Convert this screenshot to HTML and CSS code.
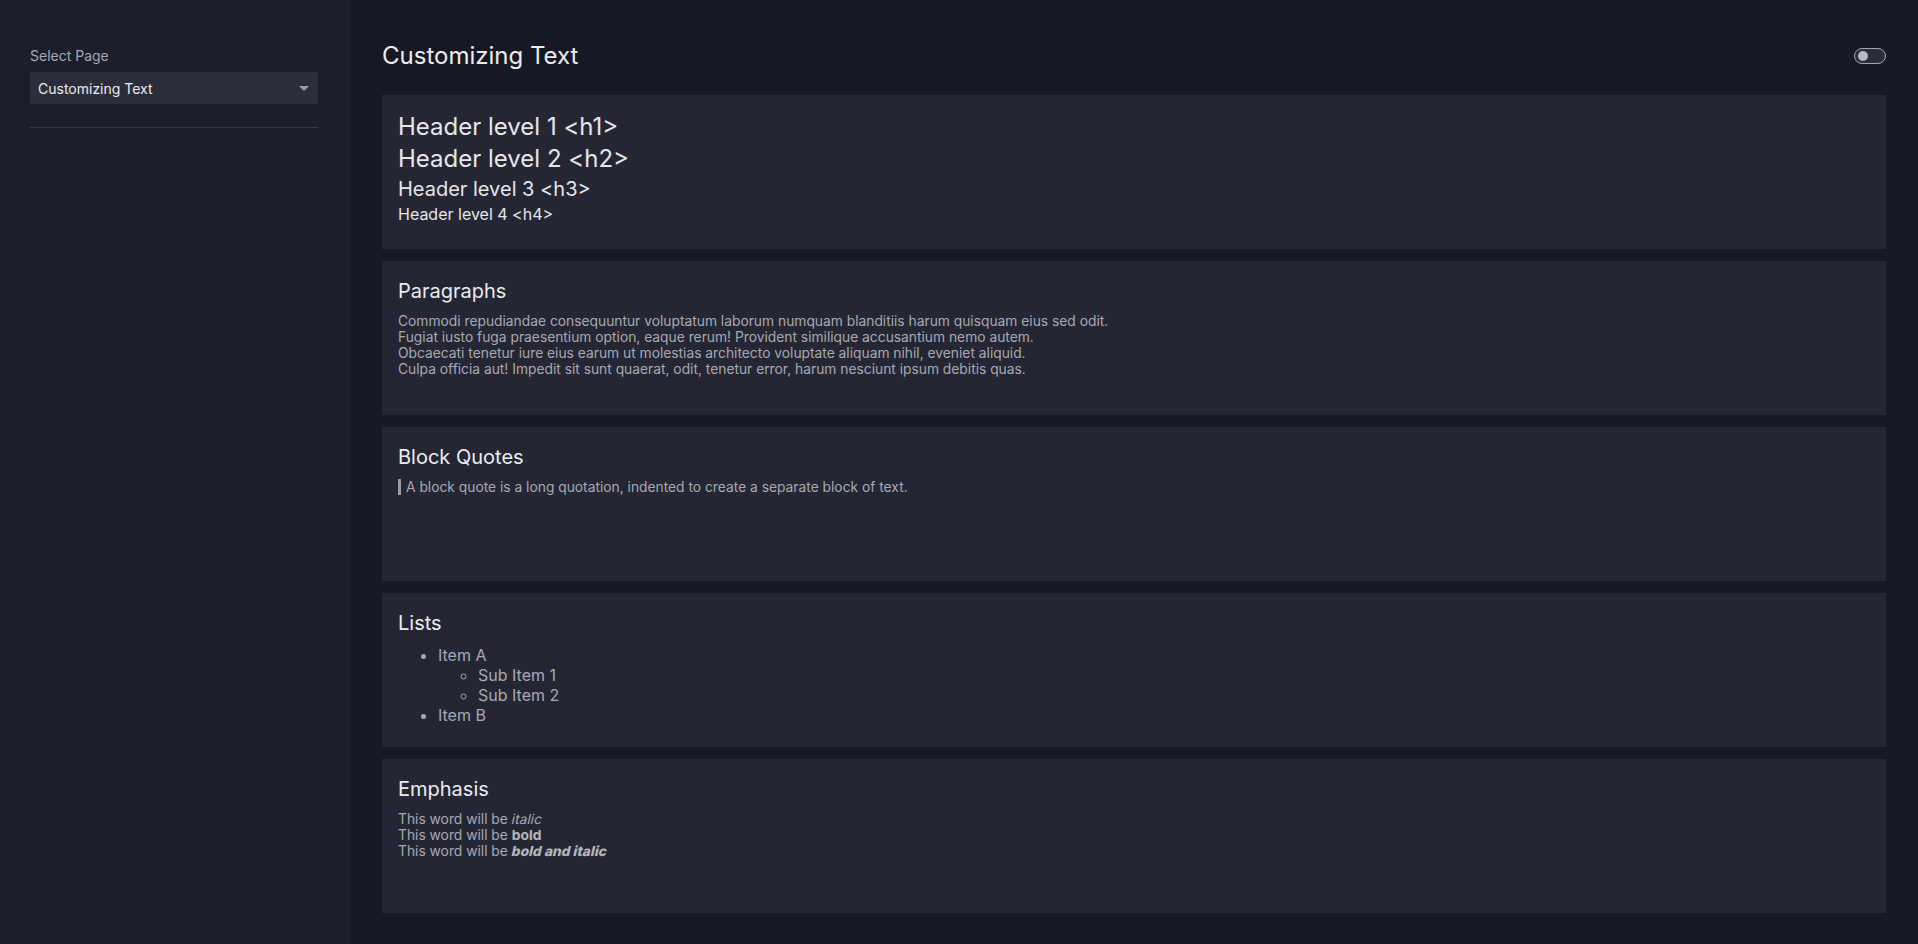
FILE: index.html
```html
<!DOCTYPE html>
<html>
<head>
<meta charset="utf-8">
<link rel="stylesheet" href="styles.css">
</head>
<body>
<div class="app">
  <aside class="sidebar">
    <div class="label">Select Page</div>
    <div class="select">
      <span>Customizing Text</span>
      <span class="caret"></span>
    </div>
    <hr class="divider">
  </aside>
  <main class="main">
    <div class="topbar">
      <h1 class="title">Customizing Text</h1>
      <div class="toggle"><span class="knob"></span></div>
    </div>
    <section class="card">
      <div class="h1">Header level 1 &lt;h1&gt;</div>
      <div class="h2">Header level 2 &lt;h2&gt;</div>
      <div class="h3">Header level 3 &lt;h3&gt;</div>
      <div class="h4">Header level 4 &lt;h4&gt;</div>
    </section>
    <section class="card">
      <h3 class="card-title">Paragraphs</h3>
      <p class="para">Commodi repudiandae consequuntur voluptatum laborum numquam blanditiis harum quisquam eius sed odit.<br>Fugiat iusto fuga praesentium option, eaque rerum! Provident similique accusantium nemo autem.<br>Obcaecati tenetur iure eius earum ut molestias architecto voluptate aliquam nihil, eveniet aliquid.<br>Culpa officia aut! Impedit sit sunt quaerat, odit, tenetur error, harum nesciunt ipsum debitis quas.</p>
    </section>
    <section class="card">
      <h3 class="card-title">Block Quotes</h3>
      <blockquote class="quote">A block quote is a long quotation, indented to create a separate block of text.</blockquote>
    </section>
    <section class="card">
      <h3 class="card-title">Lists</h3>
      <ul class="list">
        <li>Item A
          <ul class="sublist">
            <li>Sub Item 1</li>
            <li>Sub Item 2</li>
          </ul>
        </li>
        <li>Item B</li>
      </ul>
    </section>
    <section class="card">
      <h3 class="card-title">Emphasis</h3>
      <p class="para emph">This word will be <em>italic</em><br>This word will be <strong>bold</strong><br>This word will be <strong><em>bold and italic</em></strong></p>
    </section>
  </main>
</div>
</body>
</html>
```

FILE: styles.css
```css
* { box-sizing: border-box; }
html, body { margin: 0; padding: 0; }
body {
  background: #161823;
  font-family: Inter, "Noto Sans", sans-serif;
  color: #e6e6e8;
}
.app {
  display: flex;
  width: 1918px;
  height: 944px;
}
.sidebar {
  width: 350px;
  flex: none;
  background: #1c1e2a;
  padding: 46px 32px 0 30px;
}
.label {
  font-size: 14px;
  line-height: 20px;
  color: #a8aab2;
  margin-bottom: 6px;
}
.select {
  height: 32px;
  background: #2b2d3a;
  display: flex;
  align-items: center;
  justify-content: space-between;
  padding: 0 9px 0 8px;
  font-size: 14px;
  color: #ececee;
}
.caret {
  width: 0;
  height: 0;
  border-left: 5px solid transparent;
  border-right: 5px solid transparent;
  border-top: 5px solid #9a9ca4;
}
.divider {
  border: 0;
  border-top: 1px solid #33364a;
  margin: 23px 0 0 0;
}
.main {
  flex: 1;
  padding: 41px 32px 0 32px;
}
.topbar {
  display: flex;
  justify-content: space-between;
  align-items: center;
  margin-bottom: 25px;
}
.title {
  margin: 0;
  font-size: 24px;
  line-height: 29px;
  font-weight: 400;
  color: #ececee;
}
.toggle {
  width: 32px;
  height: 16px;
  border: 1px solid #a4a6ae;
  border-radius: 8px;
  background: #2b2d3a;
  display: flex;
  align-items: center;
  padding-left: 3px;
}
.knob {
  width: 10px;
  height: 10px;
  border-radius: 50%;
  background: #b8bac0;
}
.card {
  background: #242633;
  height: 154px;
  padding: 16px;
  margin-bottom: 12px;
}
.h1, .h2 { font-size: 24px; line-height: 32px; }
.h3 { font-size: 20px; line-height: 28px; }
.h4 { font-size: 16px; line-height: 22px; }
.card-title {
  margin: 0 0 8px 0;
  font-size: 20px;
  line-height: 28px;
  font-weight: 400;
  color: #ececee;
}
.para {
  margin: 0;
  font-size: 13.8px;
  line-height: 16px;
  color: #a8aab2;
}
.emph em {
  font-style: normal;
  display: inline-block;
  transform: skewX(-13deg);
}
.emph strong { color: #b4b6bc; font-weight: 700; }
.emph strong em { font-weight: 800; }
.quote {
  margin: 0;
  border-left: 3px solid #9a9ca4;
  padding-left: 5px;
  font-size: 13.8px;
  line-height: 16px;
  color: #a8aab2;
}
.list {
  margin: 0;
  padding-left: 40px;
  font-size: 16px;
  line-height: 20px;
  color: #a8aab2;
}
.sublist {
  margin: 0;
  padding-left: 40px;
  list-style-type: circle;
}
```
